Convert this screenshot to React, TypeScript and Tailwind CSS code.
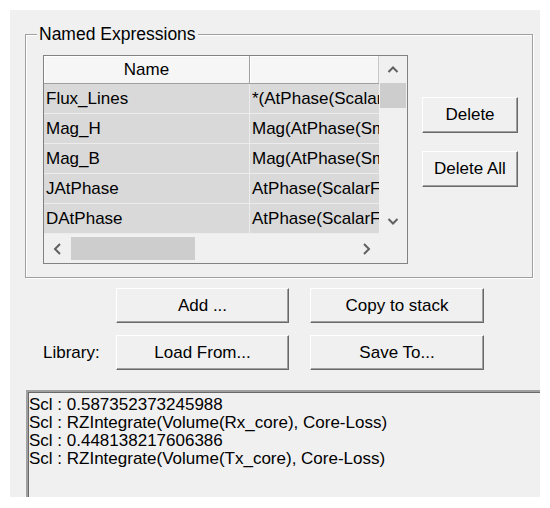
import React from "react";

const font = "font-['Liberation_Sans',Arial,sans-serif]";

const btn =
  "flex items-center justify-center bg-[#f0f0f0] text-[17px] leading-[20px] text-black border border-t-white border-l-white border-r-[#696969] border-b-[#696969] shadow-[inset_-1px_-1px_0_#a0a0a0]";

function Chev({ dir }: { dir: "up" | "down" | "left" | "right" }) {
  const d = {
    up: "M1.5 8 L6 3.5 L10.5 8",
    down: "M1.5 4 L6 8.5 L10.5 4",
    left: "M8 1 L3 6 L8 11",
    right: "M4 1 L9 6 L4 11",
  }[dir];
  return (
    <svg width="12" height="12" viewBox="0 0 12 12">
      <path d={d} fill="none" stroke="#606060" strokeWidth="2" />
    </svg>
  );
}

const rows = [
  ["Flux_Lines", "*(AtPhase(ScalarFunction(Flux_Lines)))"],
  ["Mag_H", "Mag(AtPhase(Smooth(H_Vector)))"],
  ["Mag_B", "Mag(AtPhase(Smooth(B_Vector)))"],
  ["JAtPhase", "AtPhase(ScalarFunction(J))"],
  ["DAtPhase", "AtPhase(ScalarFunction(D))"],
];

const output = [
  "Scl : 0.587352373245988",
  "Scl : RZIntegrate(Volume(Rx_core), Core-Loss)",
  "Scl : 0.448138217606386",
  "Scl : RZIntegrate(Volume(Tx_core), Core-Loss)",
];

function ListView() {
  return (
    <div className="flex w-[365px] h-[209px] border border-[#828282] bg-[#f0f0f0]">
      <div className="flex flex-col w-[335px]">
        {/* header */}
        <div className="flex h-[28px] border-b border-[#a0a0a0] bg-[#f6f6f6]">
          <div className="w-[206px] border-r border-[#a0a0a0] shadow-[inset_1px_1px_0_#fff] flex items-center justify-center text-[17px]">
            Name
          </div>
          <div className="w-[129px] shadow-[inset_1px_1px_0_#fff] border-r border-[#c8c8c8]" />
        </div>
        {rows.map(([n, e]) => (
          <div key={n} className="flex h-[30px] border-b border-[#ececec] bg-[#d9d9d9] text-[17px]">
            <div className="w-[206px] border-r border-[#ececec] flex items-center pl-[2px] whitespace-nowrap overflow-hidden">
              {n}
            </div>
            <div className="w-[129px] flex items-center pl-[2px] whitespace-nowrap overflow-hidden">
              {e}
            </div>
          </div>
        ))}
        {/* horizontal scrollbar */}
        <div className="flex h-[29px] items-stretch">
          <div className="w-[27px] flex items-center justify-center">
            <Chev dir="left" />
          </div>
          <div className="flex-1 flex py-[3px]">
            <div className="w-[124px] bg-[#cdcdcd]" />
          </div>
          <div className="w-[27px] flex items-center justify-center">
            <Chev dir="right" />
          </div>
        </div>
      </div>
      {/* vertical scrollbar */}
      <div className="flex flex-col w-[28px]">
        <div className="h-[27px] flex items-center justify-center">
          <Chev dir="up" />
        </div>
        <div className="flex-1 flex flex-col px-[1px]">
          <div className="h-[25px] bg-[#cdcdcd]" />
        </div>
        <div className="h-[27px] flex items-center justify-center">
          <Chev dir="down" />
        </div>
        <div className="h-[29px]" />
      </div>
    </div>
  );
}

export default function App() {
  return (
    <div className={`w-[550px] h-[508px] bg-white pt-[10px] pl-[10px] text-black ${font}`}>
      <div className="w-[530px] h-[487px] bg-[#f0f0f0] overflow-hidden flex flex-col">
        {/* Named Expressions group */}
        <div className="relative mt-[24px] ml-[15px] w-[508px] h-[244px] border border-[#a0a0a0] shadow-[inset_1px_1px_0_#fff,1px_1px_0_#fff]">
          <span className="absolute -top-[10px] left-[11px] px-[2px] bg-[#f0f0f0] text-[17.5px] leading-[18px] whitespace-nowrap">
            Named Expressions
          </span>
          <div className="flex pl-[17px] pt-[20px]">
            <ListView />
            <div className="flex flex-col ml-[14px] pt-[42px] gap-[18px]">
              <button className={`${btn} w-[96px] h-[36px]`}>Delete</button>
              <button className={`${btn} w-[96px] h-[36px]`}>Delete All</button>
            </div>
          </div>
        </div>

        {/* action buttons */}
        <div className="flex flex-col gap-[12px] mt-[10px]">
          <div className="flex items-center pl-[106px] gap-[21px]">
            <button className={`${btn} w-[173px] h-[35px]`}>Add ...</button>
            <button className={`${btn} w-[174px] h-[35px]`}>Copy to stack</button>
          </div>
          <div className="flex items-center pl-[33px]">
            <span className="w-[73px] text-[17px]">Library:</span>
            <button className={`${btn} w-[173px] h-[35px]`}>Load From...</button>
            <button className={`${btn} w-[174px] h-[35px] ml-[21px]`}>Save To...</button>
          </div>
        </div>

        {/* output */}
        <div className="mt-[20px] ml-[16px] flex-1 border-t-2 border-l-2 border-t-[#a0a0a0] border-l-[#a0a0a0] shadow-[inset_1px_1px_0_#696969] pt-[4px] pl-[1px] text-[17px] leading-[18px]">
          {output.map((l, i) => (
            <div key={i} className="whitespace-nowrap">
              {l}
            </div>
          ))}
        </div>
      </div>
    </div>
  );
}
